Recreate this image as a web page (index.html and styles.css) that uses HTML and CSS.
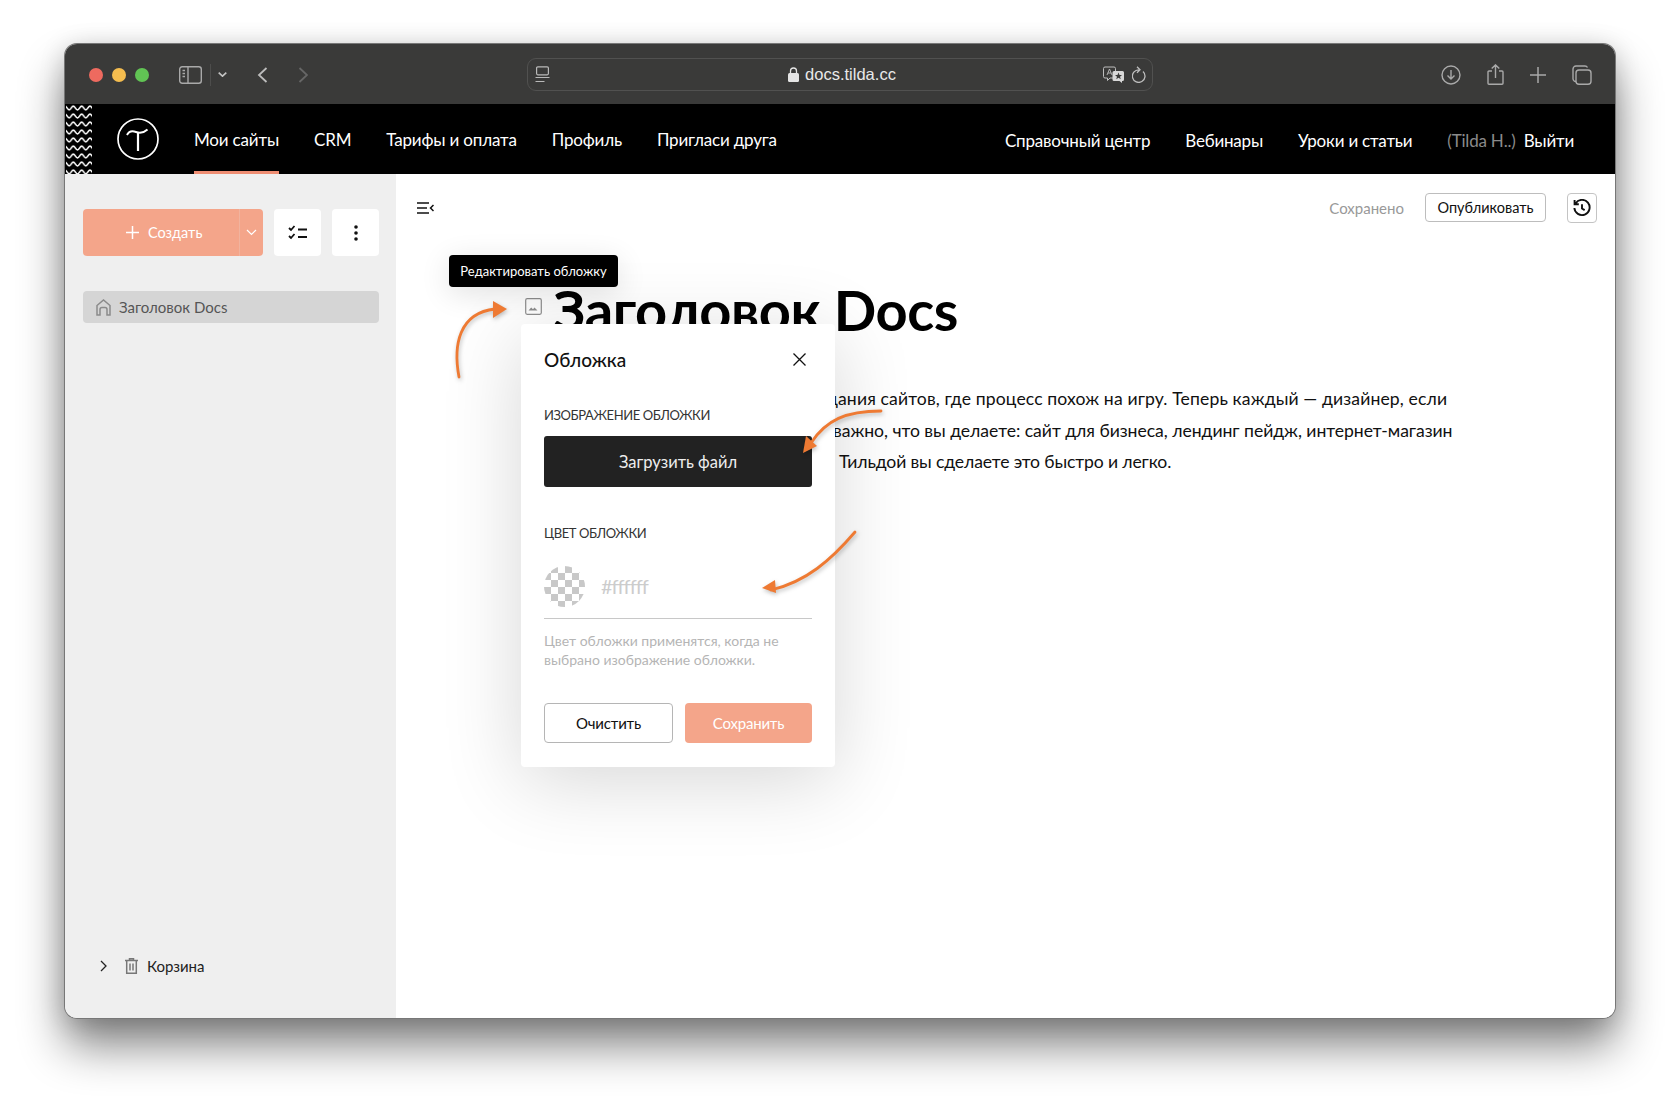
FILE: index.html
```html
<!DOCTYPE html>
<html lang="ru"><head><meta charset="utf-8"><title>Docs</title><link rel="stylesheet" href="styles.css"></head>
<body>
<div class="window">
  <header class="chrome">
    <div class="lights"><i class="light red"></i><i class="light yellow"></i><i class="light green"></i></div>
    <svg class="ic" width="23" height="18" viewBox="0 0 23 18" fill="none" stroke="#a9a9a9" stroke-width="1.400"><rect x=".7" y=".7" width="21.600" height="16.600" rx="2.500"/><path d="M9 .7v16.600M3.500 4.500h2.500M3.500 7.500h2.500M3.500 10.500h2.500"/></svg>
    <i class="divider"></i>
    <svg class="ic chev" width="9" height="5" viewBox="0 0 9 5" fill="none" stroke="#c4c4c4" stroke-width="1.600"><path d="M.7.700l3.800 3.500L8.300.700"/></svg>
    <svg class="ic back" width="11" height="16" viewBox="0 0 11 16" fill="none" stroke="#bcbcbc" stroke-width="1.800"><path d="M9.500 1L2 8l7.500 7"/></svg>
    <svg class="ic fwd" width="10" height="16" viewBox="0 0 10 16" fill="none" stroke="#666" stroke-width="1.800"><path d="M1.500 1L9 8l-7.500 7"/></svg>
    <div class="address">
      <svg class="ic" width="15" height="17" viewBox="0 0 15 17" fill="none" stroke="#b9b9b9" stroke-width="1.200"><rect x="1.600" y=".8" width="11.800" height="8" rx="1.200"/><path d="M.5 11.500h14M.5 15.500h9"/></svg>
      <div class="url"><svg width="11" height="15" viewBox="0 0 11 15"><rect y="6" width="11" height="9" rx="1.500" fill="#e4e4e4"/><path d="M2.500 6.500V4a3 3 0 016 0v2.500" fill="none" stroke="#e4e4e4" stroke-width="1.300"/></svg><span>docs.tilda.cc</span></div>
      <svg class="ic" width="22" height="17" viewBox="0 0 22 17" fill="none"><path d="M2 1h9a1.500 1.500 0 011.500 1.500v8A1.500 1.500 0 0111 12H7l-2.500 2.500V12H2A1.500 1.500 0 01.500 10.500v-8A1.500 1.500 0 012 1z" stroke="#bdbdbd"/><path d="M4 9l2.500-6L9 9M5 7h3" stroke="#bdbdbd" stroke-width=".9"/><path d="M11 5h8.500A1.500 1.500 0 0121 6.500v7A1.500 1.500 0 0119.500 15H19v2l-2.500-2H11a1.500 1.500 0 01-1.500-1.500v-7A1.500 1.500 0 0111 5z" fill="#d8d8d8"/><path d="M15.500 6.500l1 2.500h2.500l-2 1.700.8 2.500-2.300-1.500-2.300 1.500.8-2.500-2-1.700h2.500z" fill="#3a3a39"/></svg>
      <svg class="ic reload" width="14" height="17" viewBox="0 0 14 17" fill="none" stroke="#bdbdbd" stroke-width="1.300"><path d="M11 5.500A6.300 6.300 0 117 3.800M5 .8l3 3-3 2.900"/></svg>
    </div>
    <div class="chrome-tools">
      <svg width="20" height="20" viewBox="0 0 20 20" fill="none" stroke="#a9a9a9" stroke-width="1.400"><circle cx="10" cy="10" r="9"/><path d="M10 5v9M6.500 10.500L10 14l3.500-3.500"/></svg>
      <svg width="17" height="21" viewBox="0 0 17 21" fill="none" stroke="#a9a9a9" stroke-width="1.400"><path d="M5 7H2a1 1 0 00-1 1v11.300a1 1 0 001 1h13a1 1 0 001-1V8a1 1 0 00-1-1h-3M8.500 14V1M4.700 4.500L8.500.900l3.800 3.600"/></svg>
      <svg width="16" height="16" viewBox="0 0 16 16" fill="none" stroke="#a9a9a9" stroke-width="1.500"><path d="M8 0v16M0 8h16"/></svg>
      <svg width="20" height="20" viewBox="0 0 20 20" fill="none" stroke="#a9a9a9" stroke-width="1.400"><rect x="4" y="5" width="15" height="14.300" rx="3"/><path d="M1 14V4a3 3 0 013-3h9a3 3 0 012.500 1.500M4 16.500A3 3 0 011 14"/></svg>
    </div>
  </header>
  <nav class="topnav">
    <svg class="waves" width="27" height="70" viewBox="0 0 27 70"><defs><pattern id="w" width="8.330" height="8" patternUnits="userSpaceOnUse"><path d="M0 2C1.500 2 2.500 6 4.170 6S6.800 2 8.330 2" fill="none" stroke="#fff" stroke-width="1.600"/></pattern></defs><rect x="1" width="26" height="70" fill="url(#w)"/></svg>
    <svg class="logo" width="42" height="42" viewBox="0 0 42 42" fill="none" stroke="#fff" stroke-width="1.700"><circle cx="21" cy="21" r="20"/><path d="M10 17c2-4 5-4.500 9-3s7 1.500 11.500-2.500" stroke-width="2"/><path d="M21 14.500V33" stroke-width="2.200"/></svg>
    <div class="nav-left"><a class="active">Мои сайты</a><a>CRM</a><a>Тарифы и оплата</a><a>Профиль</a><a>Пригласи друга</a></div>
    <div class="nav-right"><a>Справочный центр</a><a>Вебинары</a><a>Уроки и статьи</a><a class="user"><span class="muted">(Tilda H..)</span> Выйти</a></div>
  </nav>
  <div class="app">
    <aside class="side">
      <div class="side-tools">
        <div class="create"><span class="create-main"><svg width="13" height="13" viewBox="0 0 13 13" stroke="#fff" stroke-width="1.500"><path d="M6.500 0v13M0 6.500h13"/></svg>Создать</span><span class="create-drop"><svg width="11" height="7" viewBox="0 0 11 7" fill="none" stroke="#fff" stroke-width="1.200"><path d="M1 1l4.500 4.500L10 1"/></svg></span></div>
        <span class="tool"><svg width="20" height="16" viewBox="0 0 20 16" fill="none" stroke="#111" stroke-width="1.800"><path d="M1 3l2 2 3.500-4M1 11l2 2 3.500-4M10 4.500h9M10 12h9"/></svg></span>
        <span class="tool"><svg width="4" height="16" viewBox="0 0 4 16" fill="#111"><circle cx="2" cy="2" r="1.800"/><circle cx="2" cy="8" r="1.800"/><circle cx="2" cy="14" r="1.800"/></svg></span>
      </div>
      <div class="doc-item"><svg width="15" height="17" viewBox="0 0 15 17" fill="none" stroke="#8a8a8a" stroke-width="1.500"><path d="M1 16V6.500L7.500 1 14 6.500V16h-3V10.500a2 2 0 00-2-2H6a2 2 0 00-2 2V16z"/></svg><span>Заголовок Docs</span></div>
      <div class="trash"><svg width="7" height="12" viewBox="0 0 7 12" fill="none" stroke="#222" stroke-width="1.300"><path d="M1 1l5 5-5 5"/></svg><svg class="bin" width="13" height="16" viewBox="0 0 13 16" fill="none" stroke="#777" stroke-width="1.500"><path d="M0 2.500h13M4.500 2.500V.8h4v1.700M1.700 2.500v12.700h9.600V2.500M5 5.500v7M8 5.500v7"/></svg><span>Корзина</span></div>
    </aside>
    <main class="content">
      <div class="bar">
        <svg width="17" height="12" viewBox="0 0 17 12" fill="none" stroke="#111" stroke-width="1.500"><path d="M0 1h12M0 6h10M0 11h12M16.500 3l-3 3 3 3"/></svg>
        <span class="saved">Сохранено</span>
        <span class="publish">Опубликовать</span>
        <span class="history"><svg width="18" height="18" viewBox="0 0 17 17" fill="none" stroke="#111" stroke-width="1.800"><path d="M2.500 4A7.200 7.200 0 111.300 8.500M1.500 1v4h4M8.500 5v4l2.500 1.500"/></svg></span>
      </div>
      <div class="doc">
        <h1>Заголовок Docs</h1>
        <p class="text">
          <span class="line line-a"><span class="cut">созд</span><span>ания сайтов, где процесс похож на игру. Теперь каждый — дизайнер, если</span></span>
          <span class="line line-b"><span class="cut cut-b">Не </span><span>важно, что вы делаете: сайт для бизнеса, лендинг пейдж, интернет-магазин</span></span>
          <span class="line line-c"><span class="cut cut-c">С </span><span>Тильдой вы сделаете это быстро и легко.</span></span>
        </p>
      </div>
      <svg class="cover-ic" width="17" height="17" viewBox="0 0 17 17" fill="none"><rect x=".7" y=".7" width="15.600" height="15.600" rx="1.500" stroke="#8f8f8f" stroke-width="1.200"/><path d="M3.500 12.500l2.700-3 1.800 1.700 1.500-1.700 3 3z" fill="#8f8f8f"/></svg>
      <div class="tooltip">Редактировать обложку</div>
      <section class="modal">
        <div class="modal-head"><h2>Обложка</h2><svg width="13" height="13" viewBox="0 0 13 13" stroke="#111" stroke-width="1.300"><path d="M.5.500l12 12M12.500.500l-12 12"/></svg></div>
        <div class="label first">ИЗОБРАЖЕНИЕ ОБЛОЖКИ</div>
        <div class="upload">Загрузить файл</div>
        <div class="label second">ЦВЕТ ОБЛОЖКИ</div>
        <div class="color-row"><i class="swatch"></i><span>#ffffff</span></div>
        <p class="hint">Цвет обложки применятся, когда не выбрано изображение обложки.</p>
        <div class="actions"><span class="clear">Очистить</span><span class="save">Сохранить</span></div>
      </section>
      <svg class="arrows" width="470" height="340" viewBox="0 0 470 340" fill="none">
        <g stroke="#ee7a33" stroke-width="2.800" stroke-linecap="round"><path d="M8 82C2 50 8 18 44 14"/><path d="M430 116C395 116 375 125 360 148"/><path d="M404 237C380 265 355 287 320 295"/></g>
        <g fill="#ee7a33"><path d="M56 14L42 6v17z"/><path d="M352 158l3-17 11 10z"/><path d="M311 293l13-8 1 13z"/></g>
      </svg>
    </main>
  </div>
</div>
</body></html>
```
FILE: styles.css
```css
*{box-sizing:border-box}
html,body{margin:0;height:1104px;background:#fff;overflow:hidden}
body{padding:44px 65px 0;font-family:"Lato","Noto Sans",sans-serif;color:#111}
.window{width:1550px;height:974px;border-radius:12px;overflow:hidden;display:flex;flex-direction:column;box-shadow:0 0 0 1px #777,0 28px 46px rgba(0,0,0,.48),0 4px 26px rgba(0,0,0,.18)}
.chrome{height:60px;background:#3a3a39;display:flex;align-items:center;padding:1px 23px 0 24px;flex:none}
.lights{display:flex;gap:9px;margin-right:30px}
.light{width:14px;height:14px;border-radius:50%}
.red{background:#ee6a5f}.yellow{background:#f5bd4f}.green{background:#61c454}
.ic{flex:none}
.divider{width:1px;height:22px;background:#4d4d4c;margin-left:8px}
.chev{margin-left:7px}
.back{margin-left:30px}
.fwd{margin-left:30px}
.address{margin-left:219px;width:626px;height:33px;border:1px solid #515150;border-radius:9px;display:flex;align-items:center;padding:0 6px 0 7px;color:#e9e9e9}
.url{flex:1;display:flex;align-items:center;justify-content:center;gap:6px;font-family:"Liberation Sans",sans-serif;font-size:16.500px;margin-left:31px}
.reload{margin-left:7px}
.chrome-tools{margin-left:auto;display:flex;align-items:center;gap:26px}
.topnav{height:70px;background:#000;color:#fff;display:flex;align-items:stretch;flex:none;font-size:17px}
.logo{align-self:center;margin-left:25px}
.waves{flex:none}
.nav-left,.nav-right{display:flex;gap:35px;align-items:center}
.nav-left{margin-left:35px;height:70px;letter-spacing:-.17px}
.nav-left a{height:70px;display:flex;align-items:center;border-bottom:3px solid transparent;padding-top:3px}
.nav-left a.active{border-color:#ef8e73}
.nav-right{margin-left:auto;padding-right:41px;padding-top:3px;letter-spacing:-.2px}
.user{word-spacing:4px}
.muted{color:#8a8a8a;word-spacing:0}
.app{flex:1;display:flex;min-height:0}
.side{width:331px;background:#efefef;padding:35px 17px 43px 18px;display:flex;flex-direction:column;flex:none}
.side-tools{display:flex;gap:11px;height:47px}
.create{width:181px;background:#f4a58a;border-radius:4px;display:flex;color:#fff;font-size:14.500px}
.create-main{flex:1;display:flex;align-items:center;justify-content:center;gap:9px;padding-left:6px}
.create-drop{width:24px;display:flex;align-items:center;justify-content:center;border-left:1px solid #f1b39e}
.tool{width:47px;background:#fff;border-radius:4px;display:flex;align-items:center;justify-content:center}
.doc-item{margin-top:35px;height:32px;background:#d5d5d5;border-radius:4px;display:flex;align-items:center;gap:8px;padding:0 13px;font-size:15px;color:#555}
.trash{margin-top:auto;display:flex;align-items:center;padding-left:17px;font-size:15px;color:#222}
.bin{margin:0 9px 0 18px}
.content{flex:1;background:#fff;position:relative;padding:0 18px 0 21px;overflow:hidden}
.bar{display:flex;align-items:center;height:67px}
.saved{margin-left:auto;font-size:15px;color:#999}
.publish{margin-left:21px;width:121px;height:29px;border:1px solid #bdbdbd;border-radius:4px;display:flex;align-items:center;justify-content:center;font-size:14.500px}
.history{margin-left:21px;width:30px;height:30px;border:1px solid #c4c4c4;border-radius:4px;display:flex;align-items:center;justify-content:center}
.doc{padding-left:136px}
h1{margin:34px 0 0;font-size:56px;line-height:70px;font-weight:700;white-space:nowrap;letter-spacing:-.4px;color:#000}
.text{margin:38px 0 0;font-size:17.600px;line-height:31.500px;white-space:nowrap;padding-left:2px}
.line{display:flex}
.line-a{letter-spacing:.12px}
.line-b{letter-spacing:-.04px}
.line-c{letter-spacing:-.14px}
.cut{width:283px;overflow:hidden;flex:none;text-align:right}
.cut-b{width:278px;padding-right:6px}
.cut-c{width:284px;padding-right:6px}
.cover-ic{position:absolute;left:129px;top:124px}
.tooltip{position:absolute;left:53px;top:81px;width:169px;height:32px;background:#000;color:#fff;border-radius:4px;font-size:13px;display:flex;align-items:center;justify-content:center;box-shadow:0 6px 30px rgba(0,0,0,.12)}
.modal{position:absolute;left:125px;top:150px;width:314px;height:443px;background:#fff;border-radius:4px;box-shadow:0 14px 80px rgba(0,0,0,.16);padding:22px 23px 24px;display:flex;flex-direction:column}
.modal-head{display:flex;align-items:center;justify-content:space-between;height:26px;padding-right:6px}
h2{margin:0;font-size:19px;font-weight:500}
.label{font-size:13px;color:#333;letter-spacing:-.4px}
.label.first{margin-top:34px;line-height:18px}
.upload{margin-top:12px;height:51px;background:#222;color:#eee;border-radius:3px;display:flex;align-items:center;justify-content:center;font-size:16.500px;flex:none}
.label.second{margin-top:37px;line-height:18px}
.color-row{margin-top:24px;height:53px;border-bottom:1px solid #c8c8c8;display:flex;align-items:flex-start;gap:16px;font-size:20px;line-height:41px;letter-spacing:-1px;color:#ccc;flex:none}
.swatch{width:41px;height:41px;border-radius:50%;background:repeating-conic-gradient(#c8c8c8 0 25%,#fff 0 50%) 0 0/14px 14px}
.hint{margin:12px 0 0;font-size:14px;line-height:19px;color:#b5b5b5}
.actions{margin-top:auto;display:flex;gap:12px;height:40px}
.actions span{flex:1 1 0;border-radius:4px;display:flex;align-items:center;justify-content:center;font-size:15px;letter-spacing:-.2px}
.clear{border:1px solid #b5b5b5}
.save{background:#f4a58a;color:#fff}
.arrows{position:absolute;left:55px;top:121px;filter:drop-shadow(1px 2px 2px rgba(0,0,0,.25))}
```
